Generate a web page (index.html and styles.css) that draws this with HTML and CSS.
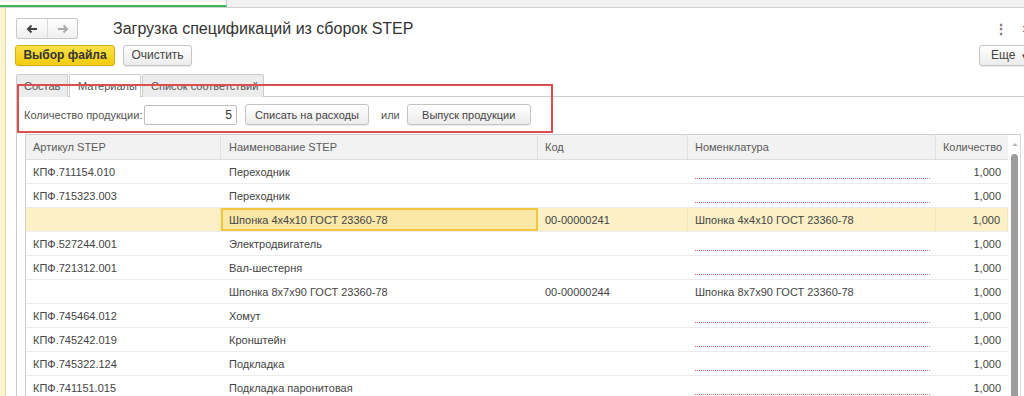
FILE: index.html
```html
<!DOCTYPE html>
<html lang="ru">
<head>
<meta charset="utf-8">
<link rel="stylesheet" href="styles.css">
</head>
<body>
<div class="topstrip">
  <div class="tab-strip-left"></div>
  <div class="tab-strip-right"></div>
</div>
<div class="main">
  <div class="sidebar"></div>
  <div class="content">
    <div class="winhead">
      <div class="nav">
        <button class="navbtn"><svg width="12" height="10" viewBox="0 0 12 10"><path d="M11 5H2M5.5 1.5L2 5l3.5 3.5" fill="none" stroke="#444" stroke-width="2"/></svg></button>
        <button class="navbtn"><svg width="12" height="10" viewBox="0 0 12 10"><path d="M1 5h9M6.5 1.5L10 5 6.5 8.5" fill="none" stroke="#aaa" stroke-width="2"/></svg></button>
      </div>
      <h1 class="title">Загрузка спецификаций из сборок STEP</h1>
      <div class="winctl">
        <span class="dots">⋮</span>
        <span class="close">×</span>
      </div>
    </div>
    <div class="toolbar">
      <button class="btn btn-primary">Выбор файла</button>
      <button class="btn btn-clear">Очистить</button>
      <div class="spacer"></div>
      <button class="btn btn-more">Еще <span class="caret">▾</span></button>
    </div>
    <div class="tabs">
      <div class="tab t1">Состав</div>
      <div class="tab t2 active">Материалы</div>
      <div class="tab t3">Список соответствий</div>
    </div>
    <div class="panel">
      <div class="formrow">
        <span class="label">Количество продукции:</span>
        <div class="input">5</div>
        <button class="btn fbtn">Списать на расходы</button>
        <span class="or">или</span>
        <button class="btn fbtn">Выпуск продукции</button>
      </div>
      <div class="tablewrap">
        <div class="grid">
          <div class="row head">
            <div class="c c1">Артикул STEP</div>
            <div class="c c2">Наименование STEP</div>
            <div class="c c3">Код</div>
            <div class="c c4">Номенклатура</div>
            <div class="c c5">Количество</div>
          </div>
          <div class="row"><div class="c c1">КПФ.711154.010</div><div class="c c2">Переходник</div><div class="c c3"></div><div class="c c4"><span class="err"></span></div><div class="c c5">1,000</div></div>
          <div class="row"><div class="c c1">КПФ.715323.003</div><div class="c c2">Переходник</div><div class="c c3"></div><div class="c c4"><span class="err"></span></div><div class="c c5">1,000</div></div>
          <div class="row sel"><div class="c c1"></div><div class="c c2 cur">Шпонка 4х4х10 ГОСТ 23360-78</div><div class="c c3">00-00000241</div><div class="c c4">Шпонка 4х4х10 ГОСТ 23360-78</div><div class="c c5">1,000</div></div>
          <div class="row"><div class="c c1">КПФ.527244.001</div><div class="c c2">Электродвигатель</div><div class="c c3"></div><div class="c c4"><span class="err"></span></div><div class="c c5">1,000</div></div>
          <div class="row"><div class="c c1">КПФ.721312.001</div><div class="c c2">Вал-шестерня</div><div class="c c3"></div><div class="c c4"><span class="err"></span></div><div class="c c5">1,000</div></div>
          <div class="row"><div class="c c1"></div><div class="c c2">Шпонка 8х7х90 ГОСТ 23360-78</div><div class="c c3">00-00000244</div><div class="c c4">Шпонка 8х7х90 ГОСТ 23360-78</div><div class="c c5">1,000</div></div>
          <div class="row"><div class="c c1">КПФ.745464.012</div><div class="c c2">Хомут</div><div class="c c3"></div><div class="c c4"><span class="err"></span></div><div class="c c5">1,000</div></div>
          <div class="row"><div class="c c1">КПФ.745242.019</div><div class="c c2">Кронштейн</div><div class="c c3"></div><div class="c c4"><span class="err"></span></div><div class="c c5">1,000</div></div>
          <div class="row"><div class="c c1">КПФ.745322.124</div><div class="c c2">Подкладка</div><div class="c c3"></div><div class="c c4"><span class="err"></span></div><div class="c c5">1,000</div></div>
          <div class="row"><div class="c c1">КПФ.741151.015</div><div class="c c2">Подкладка паронитовая</div><div class="c c3"></div><div class="c c4"><span class="err"></span></div><div class="c c5">1,000</div></div>
        </div>
        <div class="scrollbar">
          <div class="arrow"></div>
          <div class="thumb"></div>
        </div>
      </div>
    </div>
  </div>
</div>
<div class="annotation"></div>
</body>
</html>
```

FILE: styles.css
```css
* { box-sizing: border-box; }
html, body { margin: 0; padding: 0; }
body {
  width: 1024px;
  height: 396px;
  overflow: hidden;
  font-family: "Liberation Sans", Arial, sans-serif;
  font-size: 11px;
  color: #4a4a4a;
  background: #fff;
  position: relative;
}
button { font-family: inherit; }

.topstrip {
  display: flex;
  height: 8px;
  border-bottom: 1px solid #d0d0d0;
  overflow: hidden;
}
.tab-strip-left {
  width: 227px;
  border-right: 1px solid #c8c8c8;
  border-bottom: 2px solid #3cb55a;
  background: linear-gradient(#f4f4f4 0, #f4f4f4 2px, #fff 2px);
}
.tab-strip-right { flex: 1; background: #f1f1f1; }

.main { display: flex; height: 388px; }
.sidebar {
  width: 6px;
  background: #fbf3cd;
  border-right: 1px solid #e6dca8;
}
.content { flex: 1; min-width: 0; }

.winhead {
  display: flex;
  align-items: center;
  height: 35px;
  padding: 6px 0 0 10px;
}
.nav {
  display: flex;
  height: 21px;
  border: 1px solid #c9c9c9;
  border-radius: 2px;
  background: linear-gradient(#ffffff, #efefef);
}
.navbtn {
  width: 30px;
  height: 19px;
  border: 0;
  background: transparent;
  padding: 0;
  display: flex;
  align-items: center;
  justify-content: center;
}
.navbtn + .navbtn { border-left: 1px solid #dcdcdc; }
.title {
  margin: 0 0 0 35px;
  font-size: 16px;
  font-weight: normal;
  color: #333;
  flex: 1;
}
.winctl {
  display: flex;
  align-items: center;
  gap: 14px;
  margin-right: -6px;
  color: #777;
}
.dots { font-size: 14px; font-weight: bold; }
.close { font-size: 14px; }

.toolbar {
  display: flex;
  align-items: center;
  height: 22px;
  margin-top: 1px;
  padding-left: 9px;
  gap: 8px;
}
.spacer { flex: 1; }
.btn {
  height: 21px;
  padding: 0 13px;
  border: 1px solid #c4c4c4;
  border-radius: 3px;
  background: linear-gradient(#ffffff, #ececec);
  color: #444;
  font-size: 11px;
  box-shadow: 0 1px 1px rgba(0,0,0,0.08);
  white-space: nowrap;
}
.btn-primary {
  font-weight: bold;
  font-size: 12px;
  color: #333;
  width: 100px;
  padding: 0;
  background: linear-gradient(#fbe04a, #f2cc0a);
  border-color: #d6b10c;
}
.btn-clear { width: 69px; padding: 0; font-size: 12px; }
.btn-more {
  margin-right: -17px;
  padding: 0 0 0 11px;
  font-size: 12px;
  width: 62px;
  text-align: left;
}
.caret { font-size: 9px; margin-left: 3px; }

.tabs {
  display: flex;
  margin-top: 8px;
  padding-left: 10px;
  height: 23px;
  position: relative;
  z-index: 1;
}
.tab {
  height: 23px;
  line-height: 22px;
  padding: 0 7px;
  border: 1px solid #cccccc;
  border-bottom: 0;
  background: #ececec;
  color: #555;
  border-radius: 2px 2px 0 0;
  margin-right: 1px;
  white-space: nowrap;
}
.t1 { width: 52px; }
.t2 { width: 72px; padding: 0 8px; }
.t3 { width: 122px; padding: 0 8px; }
.tab.active { background: #fff; }

.panel {
  border-top: 1px solid #cccccc;
  border-left: 1px solid #cccccc;
  margin-left: 10px;
  margin-top: -1px;
  padding-left: 8px;
  height: 300px;
}
.formrow {
  display: flex;
  align-items: center;
  height: 21px;
  margin-top: 7px;
  margin-left: -1px;
}
.label { color: #555; width: 120px; }
.input {
  width: 93px;
  height: 20px;
  border: 1px solid #bdbdbd;
  border-radius: 2px;
  text-align: right;
  padding-right: 4px;
  line-height: 18px;
  color: #333;
  font-size: 12px;
}
.fbtn { margin-left: 8px; width: 124px; padding: 0; }
.or { margin: 0 7px 0 12px; color: #555; }
.or + .fbtn { margin-left: 0; }

.tablewrap {
  display: flex;
  margin-top: 9px;
  border-top: 1px solid #d0d0d0;
  border-left: 1px solid #d0d0d0;
  width: 996px;
}
.grid { width: 982px; }
.row {
  display: flex;
  height: 24px;
  border-bottom: 1px solid #ececec;
}
.row.head {
  height: 25px;
  background: #f2f2f2;
  border-bottom: 1px solid #dedede;
}
.c {
  display: flex;
  align-items: center;
  padding: 0 7px;
  white-space: nowrap;
  overflow: hidden;
  color: #444;
  position: relative;
}
.head .c { color: #5a5a5a; border-right: 1px solid #e0e0e0; }
.head .c5 { border-right: 0; }
.c1 { width: 195px; }
.c2 { width: 317px; padding-left: 8px; }
.c3 { width: 150px; }
.c4 { width: 248px; }
.c5 { width: 72px; justify-content: flex-end; padding-right: 7px; }
.head .c5 { padding-right: 6px; }
.row.sel { background: #fcf0c6; }
.row.sel .c { border-right: 1px solid #f3e6b8; }
.c.cur {
  background: #fbe7a6;
  border: 2px solid #f3c63c !important;
  padding-left: 6px;
}
.err {
  position: absolute;
  left: 7px;
  right: 6px;
  top: 18px;
  height: 1px;
  background: repeating-linear-gradient(90deg, #ea6a6a 0, #ea6a6a 1px, transparent 1px, transparent 2px);
}

.scrollbar {
  width: 13px;
  position: relative;
  border-right: 1px solid #d8d8d8;
}
.arrow {
  position: absolute;
  left: 4px;
  top: 8px;
  width: 0; height: 0;
  border-left: 3px solid transparent;
  border-right: 3px solid transparent;
  border-bottom: 3px solid #bbb;
}
.thumb {
  position: absolute;
  left: 3px;
  top: 19px;
  width: 7px;
  height: 260px;
  background: #9c9c9c;
  border-radius: 4px;
}

.annotation {
  position: absolute;
  left: 17px;
  top: 84px;
  width: 536px;
  height: 49px;
  border: 2px solid #dd4f4f;
  pointer-events: none;
  z-index: 5;
}
```
